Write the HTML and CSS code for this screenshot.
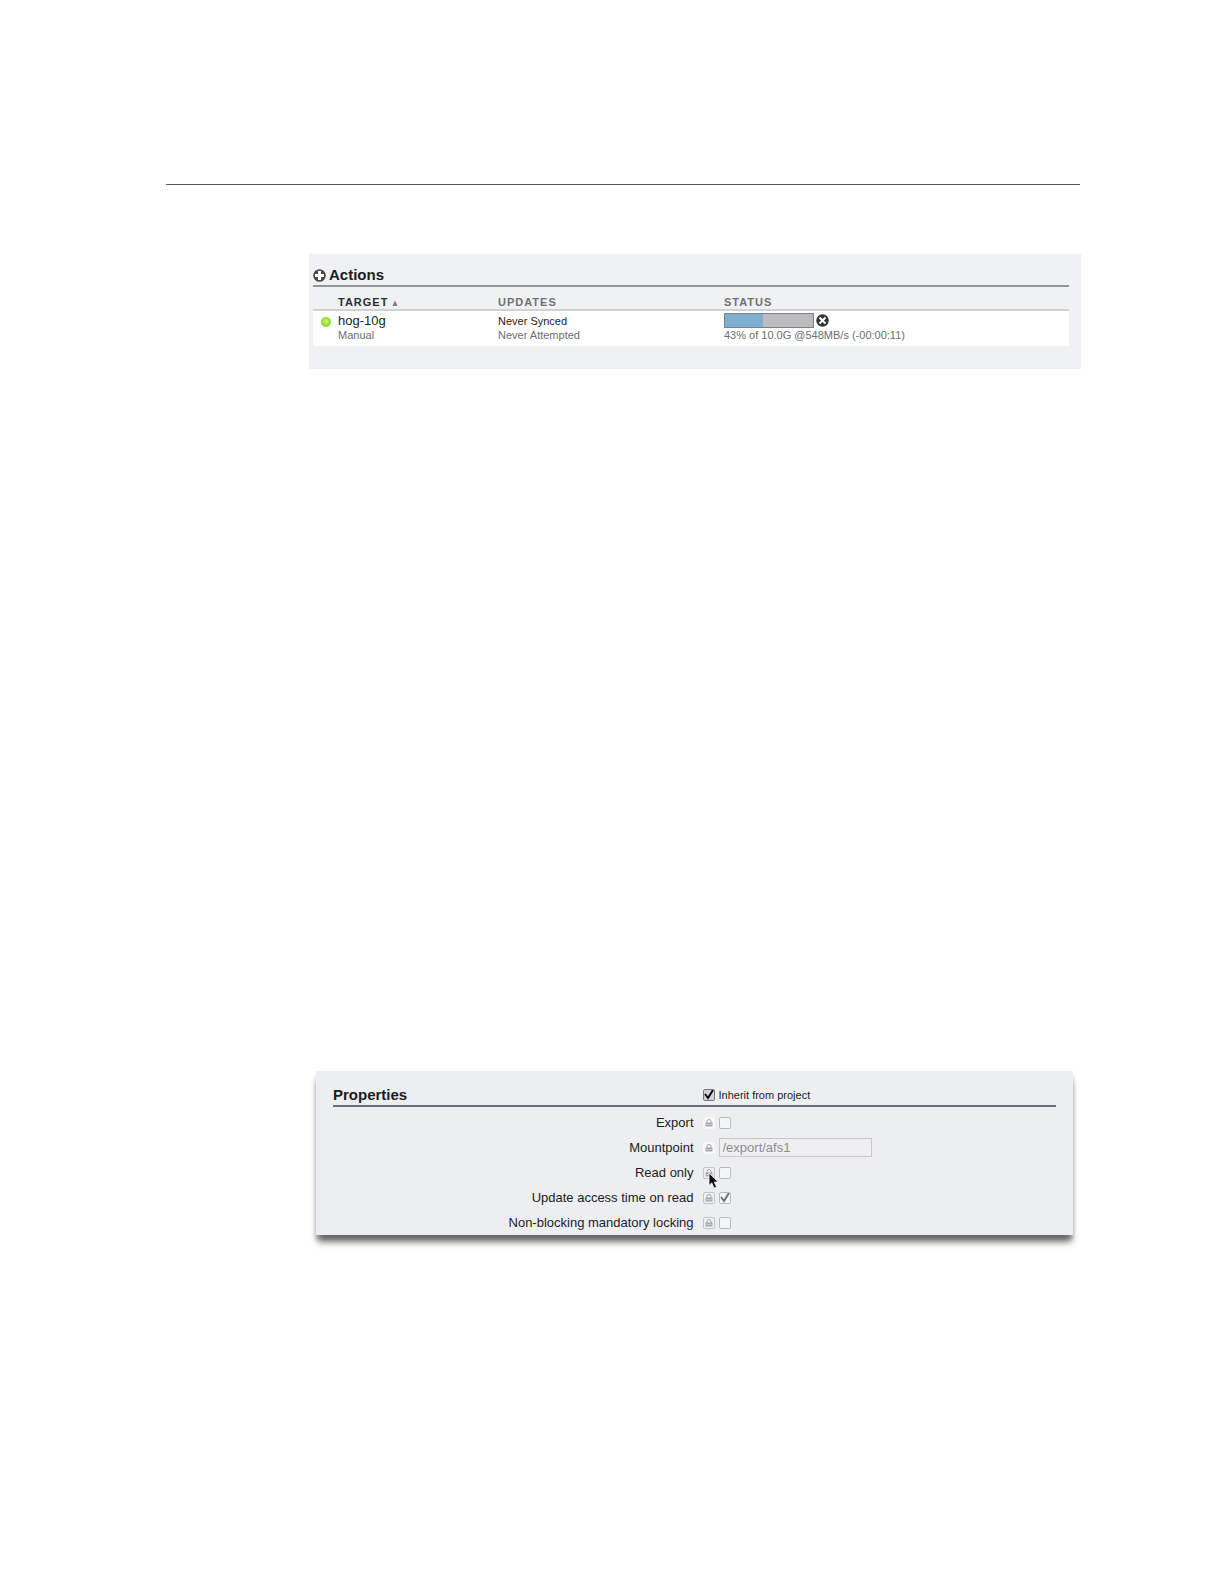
FILE: index.html
```html
<!DOCTYPE html>
<html lang="en">
<head>
    <meta charset="UTF-8" />
    <meta name="viewport" content="width=device-width, initial-scale=1" />
    <title>Replication Actions and Properties</title>
    <link rel="stylesheet" href="styles.css">
</head>
<body>
<svg class="sprite" aria-hidden="true">
    <symbol id="lock" viewBox="0 0 10 10">
        <path d="M3 5V3.500a2 2 0 0 1 4 0V5" fill="none" stroke="#a3a4a7" stroke-width="1" />
        <rect x="1.500" y="4.500" width="7" height="4" fill="#a9aaad" />
        <path d="M2 6.500h6" stroke="#d3d4d6" stroke-width="0.700" />
    </symbol>
</svg>
<main class="page">
    <hr class="page-rule" />

    <section class="actions">
        <h2 class="actions-title">
            <button type="button" class="icon-button" aria-label="Add action">
                <svg width="13" height="13" viewBox="0 0 13 13">
                    <circle cx="6.500" cy="6.500" r="6.300" fill="#4a4b4d" />
                    <path d="M6.500 2v9M2 6.500h9" stroke="#fff" stroke-width="3" />
                </svg>
            </button>
            Actions
        </h2>
        <table class="actions-table">
            <colgroup>
                <col class="col-dot" />
                <col class="col-target" />
                <col class="col-updates" />
                <col />
            </colgroup>
            <thead>
                <tr>
                    <td></td>
                    <th scope="col" class="sorted">TARGET <svg width="6" height="6" viewBox="0 0 6 6"><path d="M3 0.500L5.500 6h-5z" fill="#77787a" /></svg></th>
                    <th scope="col">UPDATES</th>
                    <th scope="col">STATUS</th>
                </tr>
            </thead>
            <tbody>
                <tr>
                    <td><span class="dot"></span></td>
                    <td>
                        <div class="target-name">hog-10g</div>
                        <div class="sub">Manual</div>
                    </td>
                    <td>
                        <div class="synced">Never Synced</div>
                        <div class="sub">Never Attempted</div>
                    </td>
                    <td>
                        <div class="status-row">
                            <div class="bar" role="progressbar" aria-label="Sync progress" aria-valuenow="43" aria-valuemin="0" aria-valuemax="100">
                                <div class="bar-fill" style="width: 43%"></div>
                            </div>
                            <button type="button" class="icon-button" aria-label="Cancel">
                                <svg width="13" height="13" viewBox="0 0 13 13">
                                    <circle cx="6.500" cy="6.500" r="6.200" fill="#343536" />
                                    <path d="M3.500 3.500l6 6M9.500 3.500l-6 6" stroke="#fff" stroke-width="2" />
                                </svg>
                            </button>
                        </div>
                        <div class="sub">43% of 10.0G @548MB/s (-00:00:11)</div>
                    </td>
                </tr>
            </tbody>
        </table>
    </section>

    <form class="properties">
        <div class="properties-head">
            <h2>Properties</h2>
            <div class="field">
                <input type="checkbox" id="inherit" class="check strong" checked />
                <label for="inherit">Inherit from project</label>
            </div>
        </div>
        <div class="row">
            <label for="export">Export</label>
            <div class="field">
                <button type="button" class="lock open" aria-label="Lock export"><svg><use href="#lock" /></svg></button>
                <input type="checkbox" id="export" class="check" />
            </div>
        </div>
        <div class="row">
            <label for="mountpoint">Mountpoint</label>
            <div class="field">
                <button type="button" class="lock open" aria-label="Lock mountpoint"><svg><use href="#lock" /></svg></button>
                <input type="text" id="mountpoint" class="text" value="/export/afs1" />
            </div>
        </div>
        <div class="row">
            <label for="readonly">Read only</label>
            <div class="field">
                <button type="button" class="lock" aria-label="Lock read only"><svg><use href="#lock" /></svg></button>
                <input type="checkbox" id="readonly" class="check" />
                <svg class="pointer" width="12" height="18" viewBox="0 0 12 18" aria-hidden="true">
                    <path d="M1 1v12.500l2.800-2.600 2.200 5.300 2.600-1.100-2.300-5.100h4z" fill="#111" stroke="#fff" stroke-width="0.800" />
                </svg>
            </div>
        </div>
        <div class="row">
            <label for="atime">Update access time on read</label>
            <div class="field">
                <button type="button" class="lock" aria-label="Lock update access time"><svg><use href="#lock" /></svg></button>
                <input type="checkbox" id="atime" class="check" checked />
            </div>
        </div>
        <div class="row">
            <label for="nbmand">Non-blocking mandatory locking</label>
            <div class="field">
                <button type="button" class="lock" aria-label="Lock mandatory locking"><svg><use href="#lock" /></svg></button>
                <input type="checkbox" id="nbmand" class="check" />
            </div>
        </div>
    </form>
</main>
</body>
</html>
```
FILE: styles.css
```css
* {
    box-sizing: border-box;
}
body {
    margin: 0;
    background-color: #fff;
    font-family: "Liberation Sans", Arial, sans-serif;
    font-size: 13px;
    color: #1c1c1e;
}
.sprite {
    display: none;
}
.page {
    padding: 184px 143px 160px 166px;
}
.page-rule {
    height: 1px;
    margin: 0 1px 69px 0;
    border: none;
    background-color: #58585a;
}
h2 {
    margin: 0;
    font-size: 15px;
    line-height: 20px;
}
svg {
    display: block;
}
.icon-button {
    padding: 0;
    border: none;
    background: none;
    cursor: pointer;
}

/* Actions */
.actions {
    margin-left: 143px;
    padding: 11px 12px 23px 4px;
    background-color: #f0f1f3;
}
.actions-title {
    display: flex;
    align-items: center;
    gap: 3px;
    border-bottom: 2px solid #929497;
}
.actions-table {
    width: 100%;
    table-layout: fixed;
    border-collapse: collapse;
}
.col-dot {
    width: 25px;
}
.col-target {
    width: 160px;
}
.col-updates {
    width: 226px;
}
.actions-table td,
.actions-table th {
    padding: 0;
    text-align: left;
    vertical-align: top;
}
.actions-table thead {
    border-bottom: 2px solid #d0d1d3;
}
.actions-table th {
    padding-top: 9px;
    font-size: 11px;
    line-height: 13px;
    letter-spacing: 1px;
    color: #6f7073;
}
.actions-table th.sorted {
    color: #2c2c2e;
}
.sorted svg {
    display: inline-block;
}
.actions-table tbody {
    background-color: #fff;
}
.actions-table tbody td {
    padding: 1px 0 5px;
}
.dot {
    display: block;
    width: 10px;
    height: 10px;
    margin: 5px 0 0 8px;
    border-radius: 50%;
    background: radial-gradient(circle at 50% 45%, #c3f25c 20%, #84d628 60%, #a5d86a);
}
.target-name {
    line-height: 17px;
}
.synced {
    padding-top: 2px;
    font-size: 11px;
    line-height: 15px;
}
.sub {
    font-size: 11px;
    line-height: 12px;
    color: #6c6d70;
}
.status-row {
    display: flex;
    align-items: center;
    gap: 2px;
    height: 17px;
}
.bar {
    width: 90px;
    height: 15px;
    border: 1px solid #7b8187;
    background-color: #bcbcbe;
}
.bar-fill {
    height: 100%;
    background-color: #7eaed2;
}

/* Properties */
.properties {
    margin: 702px 8px 0 150px;
    padding: 14px 17px 0;
    background-color: #edeef2;
    box-shadow: 0 9px 7px -2px rgba(0,0,0,0.5), 0 5px 4px rgba(0,0,0,0.22);
}
.properties-head,
.row {
    display: grid;
    grid-template-columns: 1fr 1fr;
    column-gap: 16px;
    align-items: center;
}
.properties-head {
    margin-bottom: 3px;
    border-bottom: 2px solid #6e6f74;
    font-size: 11px;
}
.row {
    height: 25px;
}
.row > label {
    margin-right: -7px;
    text-align: right;
}
.field {
    position: relative;
    display: flex;
    align-items: center;
}
.check {
    appearance: none;
    flex: none;
    width: 12px;
    height: 12px;
    margin: 0 4px 0 0;
    border: 1px solid #b9babd;
    border-radius: 2px;
    background-color: #f4f5f7;
}
.check:checked {
    background: #f4f5f7 url("data:image/svg+xml,%3Csvg xmlns='http://www.w3.org/2000/svg' viewBox='0 0 12 12'%3E%3Cpath d='M2 5l3 4 5-8' fill='none' stroke='%23707174' stroke-width='2'/%3E%3C/svg%3E") center / 12px 12px no-repeat;
}
.check.strong {
    border-color: #77787b;
    background-color: #d2d3d6;
}
.check.strong:checked {
    background-image: url("data:image/svg+xml,%3Csvg xmlns='http://www.w3.org/2000/svg' viewBox='0 0 12 12'%3E%3Cpath d='M2 5l3 4 5-8' fill='none' stroke='%23111' stroke-width='2'/%3E%3C/svg%3E");
}
.lock {
    flex: none;
    width: 12px;
    height: 12px;
    margin-right: 4px;
    padding: 0;
    border: 1px solid #c3c4c7;
    border-radius: 2px;
    background-color: #f0f1f3;
}
.lock.open {
    border-color: #f7f7f9;
    background-color: #f9f9fb;
}
.lock svg {
    width: 10px;
    height: 10px;
}
.text {
    width: 153px;
    height: 19px;
    padding: 0 3px;
    border: 1px solid #c6c7ca;
    background-color: #efeff2;
    font: inherit;
    color: #8b8c8f;
}
.pointer {
    position: absolute;
    left: 5px;
    top: 5px;
}
```
